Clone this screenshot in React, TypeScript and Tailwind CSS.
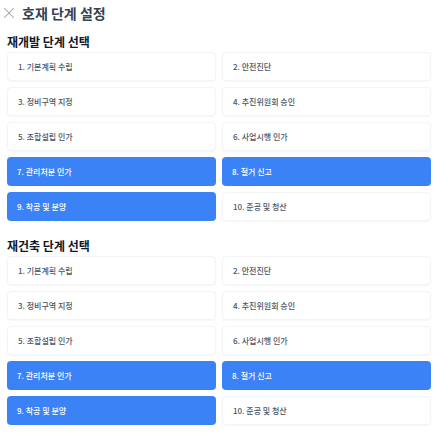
import { X } from "lucide-react";

const steps = [
  "1. 기본계획 수립",
  "2. 안전진단",
  "3. 정비구역 지정",
  "4. 추진위원회 승인",
  "5. 조합설립 인가",
  "6. 사업시행 인가",
  "7. 관리처분 인가",
  "8. 철거 신고",
  "9. 착공 및 분양",
  "10. 준공 및 청산",
];

const selected = [6, 7, 8];

function StepSection({ title }: { title: string }) {
  return (
    <div>
      <h2 className="h-[14px] leading-[14px] text-[12px] font-semibold text-gray-900 pl-[7px] mb-[3px]">
        {title}
      </h2>
      <div className="grid grid-cols-2 gap-[6px] pl-[7px] pr-[4px]">
        {steps.map((s, i) => {
          const on = selected.includes(i);
          return (
            <button
              key={s}
              className={
                on
                  ? "h-[29px] rounded-[4px] bg-[#3b82f6] text-white text-left px-[10px] text-[8px] font-medium"
                  : "h-[29px] rounded-[4px] bg-white border border-gray-100 shadow-[0_1px_2px_rgba(0,0,0,0.04)] text-gray-600 text-left px-[10px] text-[8px] font-medium"
              }
            >
              {s}
            </button>
          );
        })}
      </div>
    </div>
  );
}

export default function App() {
  return (
    <div
      className="w-[435px] h-[433px] bg-white overflow-hidden"
      style={{ fontFamily: '"Noto Sans CJK KR", "Noto Sans", sans-serif' }}
    >
      {/* Header */}
      <div className="h-[26px] flex items-center gap-[4px]">
        <X size={18} strokeWidth={1.4} className="text-gray-400" />
        <span className="text-[14px] font-bold text-gray-700">호재 단계 설정</span>
      </div>

      <div className="mt-[9px]">
        <StepSection title="재개발 단계 선택" />
      </div>
      <div className="mt-[18px]">
        <StepSection title="재건축 단계 선택" />
      </div>
    </div>
  );
}
